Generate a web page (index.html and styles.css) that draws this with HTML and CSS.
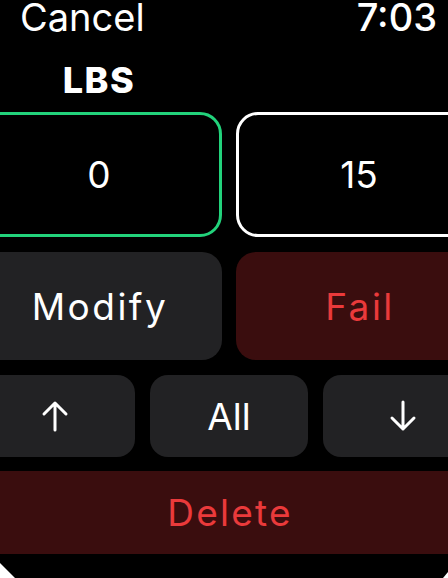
FILE: index.html
```html
<!DOCTYPE html>
<html lang="en">
<head>
<meta charset="UTF-8" />
<title>Set entry</title>
<link rel="stylesheet" href="styles.css">
</head>
<body>

<div class="frame">
  <div class="screen">
    <header class="top">
      <span class="cancel">Cancel</span>
      <span class="time">7:03</span>
    </header>

    <div class="labels">
      <span class="unit">LBS</span>
      <span></span>
    </div>

    <div class="fields">
      <div class="field active">0</div>
      <div class="field">15</div>
    </div>

    <div class="actions">
      <button class="btn">Modify</button>
      <button class="btn danger">Fail</button>
    </div>

    <div class="nav">
      <button class="btn" aria-label="Up">
        <svg width="28" height="32" viewBox="0 0 28 32"><path d="M14 30V3M3 14L14 3l11 11" fill="none" stroke="#fff" stroke-width="3" stroke-linecap="round" stroke-linejoin="round"/></svg>
      </button>
      <button class="btn">All</button>
      <button class="btn" aria-label="Down">
        <svg width="28" height="32" viewBox="0 0 28 32"><path d="M14 2v27M3 18l11 11 11-11" fill="none" stroke="#fff" stroke-width="3" stroke-linecap="round" stroke-linejoin="round"/></svg>
      </button>
    </div>

    <button class="btn danger wide">Delete</button>
  </div>
</div>

</body>
</html>
```

FILE: styles.css
```css
body { margin: 0; background: #fff; font-family: Inter, "Noto Sans", sans-serif; color: #fff; overflow: hidden; }
.frame { width: 448px; height: 578px; background: #000; overflow: hidden;
  clip-path: polygon(0 0, 100% 0, 100% 572px, 443px 100%, 15px 100%, 0 563px); }
.screen { width: 506px; margin-left: -24px; }

.top { display: flex; justify-content: space-between; padding: 0 45px 0 44px; height: 34px; line-height: 34px; font-size: 38px; }
.time { font-weight: 500; }

.labels { display: grid; grid-template-columns: 1fr 1fr; gap: 14px; padding-top: 24px; margin-bottom: 10px; line-height: 44px; }
.unit { text-align: center; font-size: 36px; font-weight: 800; letter-spacing: 1.5px; }

.fields { display: grid; grid-template-columns: 1fr 1fr; gap: 14px; margin-bottom: 15px; }
.field { height: 125px; box-sizing: border-box; border: 3px solid #fff; border-radius: 22px; display: flex; align-items: center; justify-content: center; font-size: 37px; }
.field.active { border-color: #22d27b; }

.btn { border: none; padding: 0; margin: 0; background: #222224; color: #fff; font-family: inherit; font-size: 37px; border-radius: 20px; display: flex; align-items: center; justify-content: center; }
.btn.danger { background: #3a0d0e; color: #ea3a3b; }

.actions { display: grid; grid-template-columns: 1fr 1fr; gap: 14px; margin-bottom: 15px; }
.actions .btn { height: 108px; letter-spacing: 2.5px; text-indent: 2px; }

.nav { display: grid; grid-template-columns: 1fr 1fr 1fr; gap: 15px; margin-bottom: 14px; }
.nav .btn { height: 82px; border-radius: 18px; }

.wide { width: 100%; height: 83px; border-radius: 18px; letter-spacing: 2.2px; text-indent: 2px; }
```
